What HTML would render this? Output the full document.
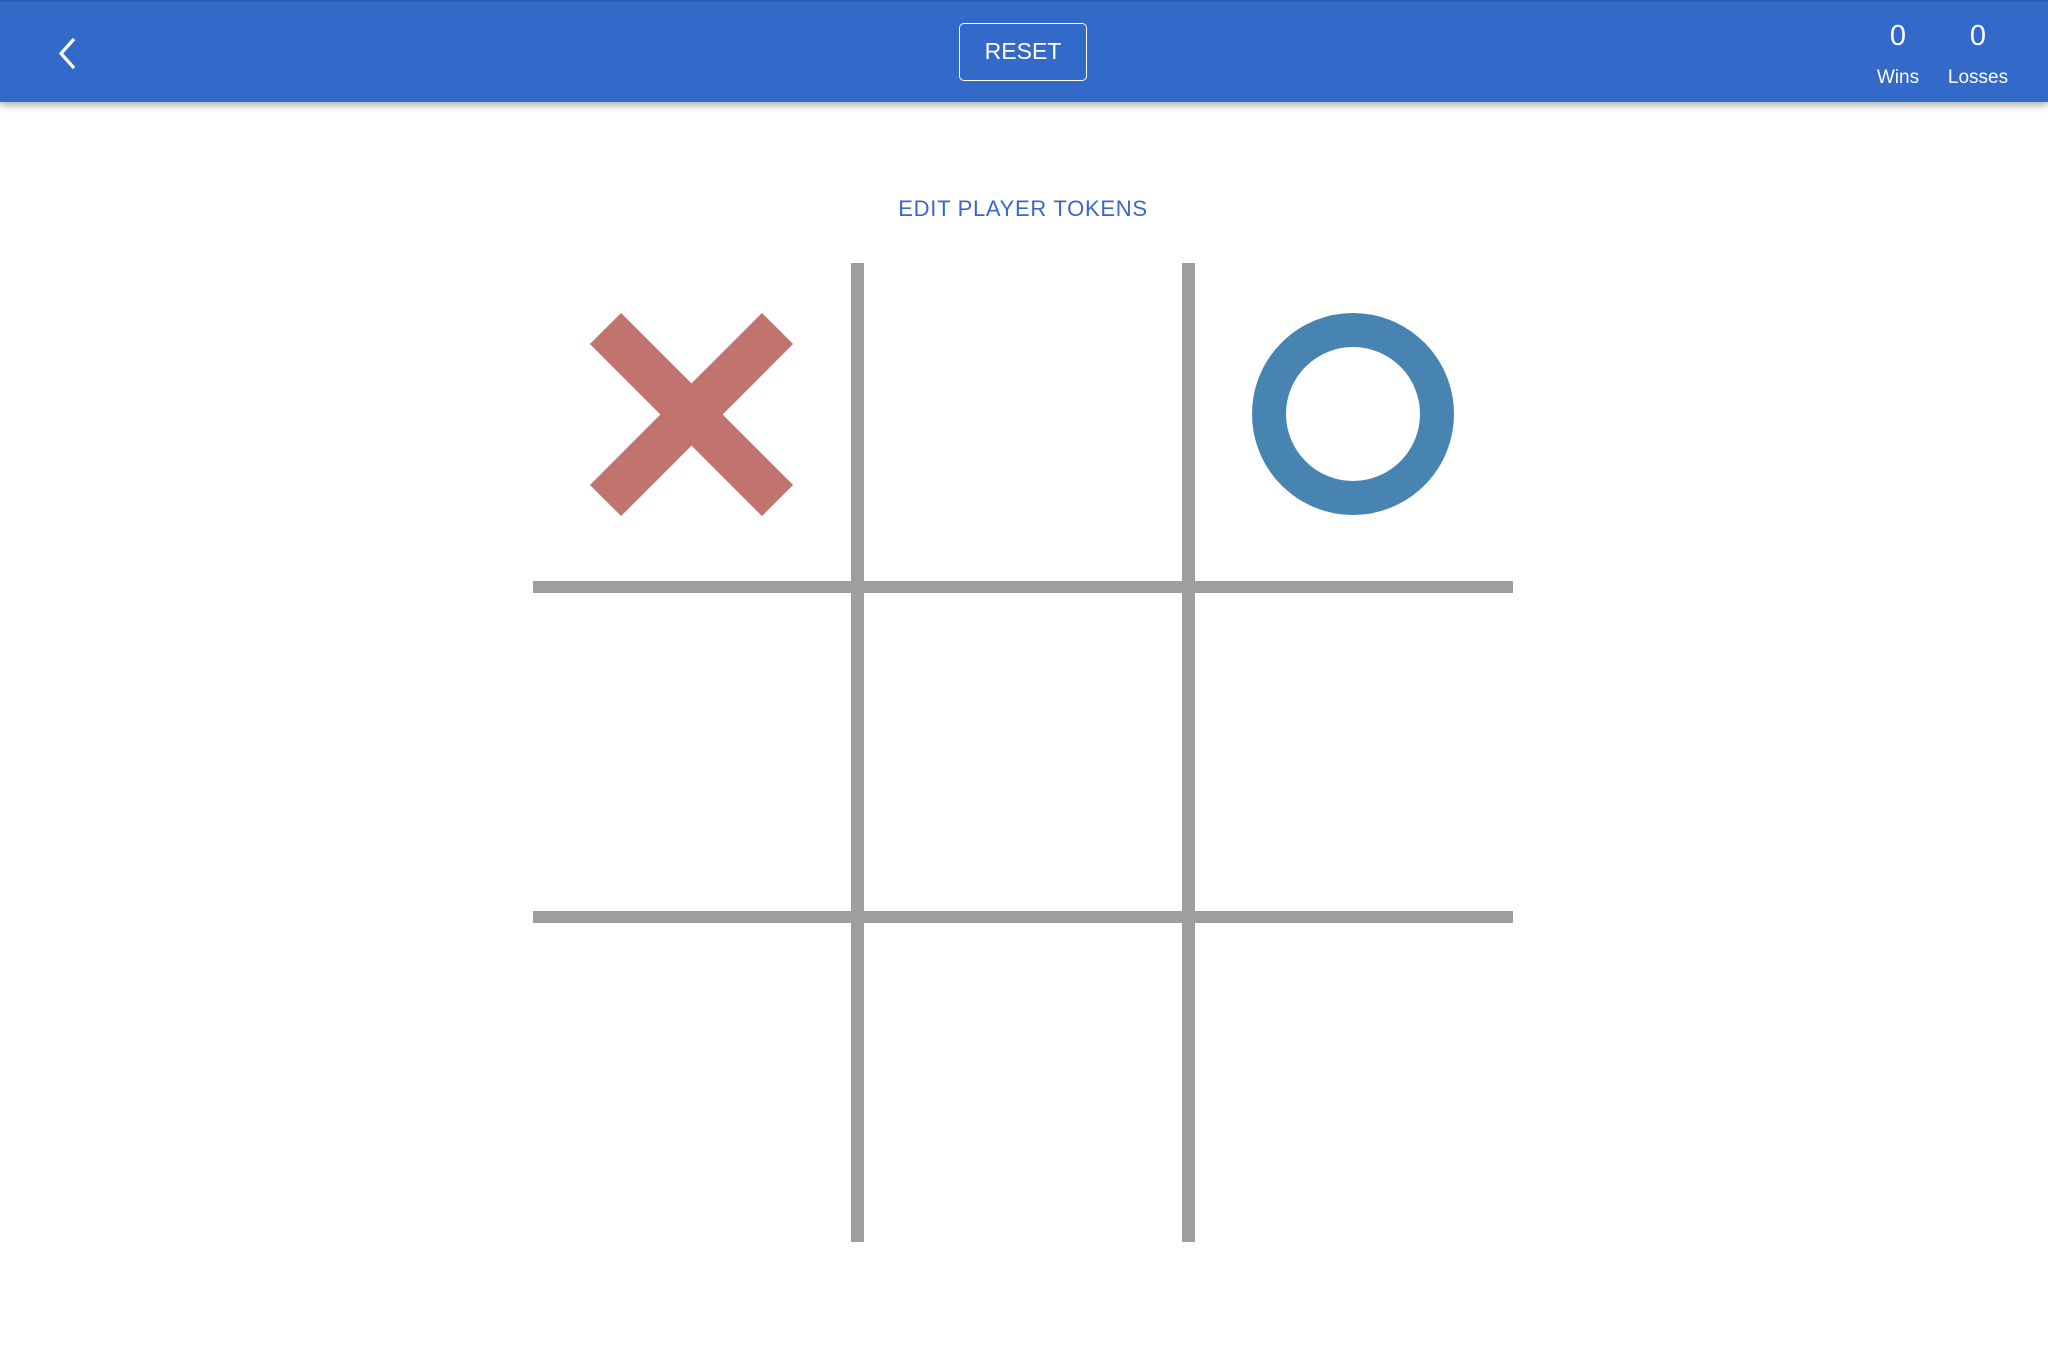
<!DOCTYPE html>
<html><head><meta charset="utf-8"><style>
html,body{margin:0;padding:0;width:2048px;height:1370px;background:#fff;overflow:hidden;font-family:"Liberation Sans",Arial,sans-serif}
.hdr{position:absolute;left:0;top:0;width:2048px;height:102px;background:#3369c9;border-top:2px solid #2d5cb3;box-sizing:border-box;box-shadow:0 3px 8px rgba(0,0,0,0.35)}
.reset{position:absolute;left:959px;top:21px;width:128px;height:58px;box-sizing:border-box;border:1.5px solid #fff;border-radius:5px;color:#fff;font-size:23px;line-height:55px;text-align:center}
.stat{position:absolute;color:#fff;text-align:center;width:100px}
.num{font-size:29px;top:18px}
.lbl{font-size:19px;top:65px}
.edit{position:absolute;left:0;width:2046px;top:196px;text-align:center;color:#3a68c4;font-size:22px;letter-spacing:0.7px}
</style></head><body>
<div class="hdr">
<svg style="position:absolute;left:50px;top:32px" width="36" height="40" viewBox="0 0 36 40"><path d="M24 5 L11 19.5 L24 34" fill="none" stroke="#fff" stroke-width="3.2"/></svg>
<div class="reset">RESET</div>
<div class="stat num" style="left:1848px">0</div>
<div class="stat num" style="left:1928px">0</div>
<div class="stat lbl" style="left:1848px">Wins</div>
<div class="stat lbl" style="left:1928px">Losses</div>
</div>
<div class="edit">EDIT PLAYER TOKENS</div>
<svg style="position:absolute;left:0;top:0" width="2048" height="1370">
<rect x="851" y="263" width="13" height="979" fill="#9e9e9e"/>
<rect x="1182" y="263" width="13" height="979" fill="#9e9e9e"/>
<rect x="533" y="581" width="980" height="12" fill="#9e9e9e"/>
<rect x="533" y="911" width="980" height="12" fill="#9e9e9e"/>
<line x1="605.5" y1="328.5" x2="777.5" y2="500.5" stroke="#c1736e" stroke-width="44"/>
<line x1="777.5" y1="328.5" x2="605.5" y2="500.5" stroke="#c1736e" stroke-width="44"/>
<circle cx="1353" cy="414" r="84" fill="none" stroke="#4884b2" stroke-width="34"/>
</svg>
</body></html>
